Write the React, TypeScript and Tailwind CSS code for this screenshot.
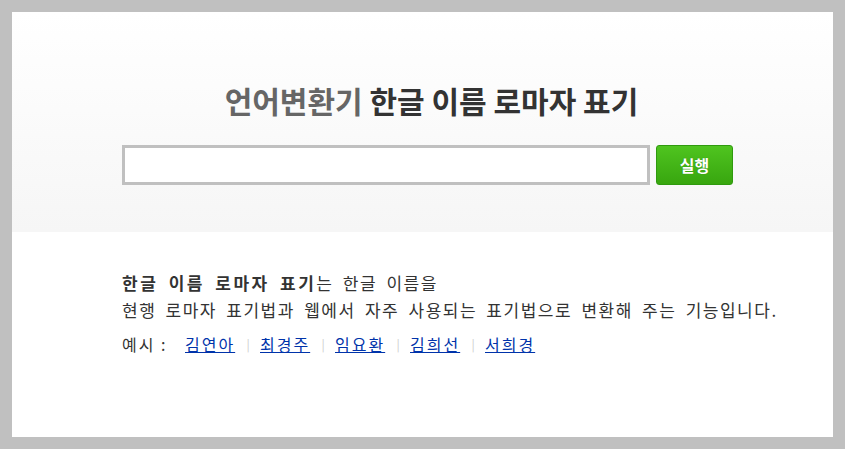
export default function App() {
  const examples = ["김연아", "최경주", "임요환", "김희선", "서희경"];

  return (
    <div className="h-[449px] w-[845px] bg-[#c0c0c0] p-3">
      <div className="flex h-full flex-col bg-white font-['Noto_Sans_CJK_KR',sans-serif]">
        <div className="h-[220px] bg-gradient-to-b from-white to-[#f6f6f6] pt-[67px]">
          <h1 className="pl-[18px] text-center text-[30px] leading-[42px] font-bold text-[#333]">
            <span className="text-[#666]">언어변환기</span> 한글 이름 로마자 표기
          </h1>
          <div className="mt-[24px] flex gap-[6px] pl-[110px]">
            <input
              type="text"
              className="h-[40px] w-[528px] border-[3px] border-[#c0c0c0] bg-white outline-none"
            />
            <button className="h-[40px] w-[77px] rounded-[3px] border border-[#2f9a0e] bg-gradient-to-b from-[#4fc41f] to-[#38a60f] text-[16px] font-bold text-white [text-shadow:0_0_1px_#2a8a0a]">
              실행
            </button>
          </div>
        </div>
        <div className="pl-[110px] pt-[37px] text-[17px] tracking-[1.5px] [word-spacing:4px] text-[#333]">
          <p className="leading-[27px]">
            <b className="font-bold tracking-[2.5px]">한글 이름 로마자 표기</b>는 한글 이름을
            <br />
            현행 로마자 표기법과 웹에서 자주 사용되는 표기법으로 변환해 주는 기능입니다.
          </p>
          <div className="mt-[10px] flex items-center text-[16px] leading-[22px] tracking-[2px] [word-spacing:0px]">
            <span className="w-[63px]">예시 :</span>
            {examples.map((name, i) => (
              <span key={name} className="flex items-center">
                {i > 0 && <span className="w-[22px] text-center text-[12px] text-[#ccc]">|</span>}
                <a href="#" className="w-[53px] text-[#0033aa] underline">
                  {name}
                </a>
              </span>
            ))}
          </div>
        </div>
      </div>
    </div>
  );
}
